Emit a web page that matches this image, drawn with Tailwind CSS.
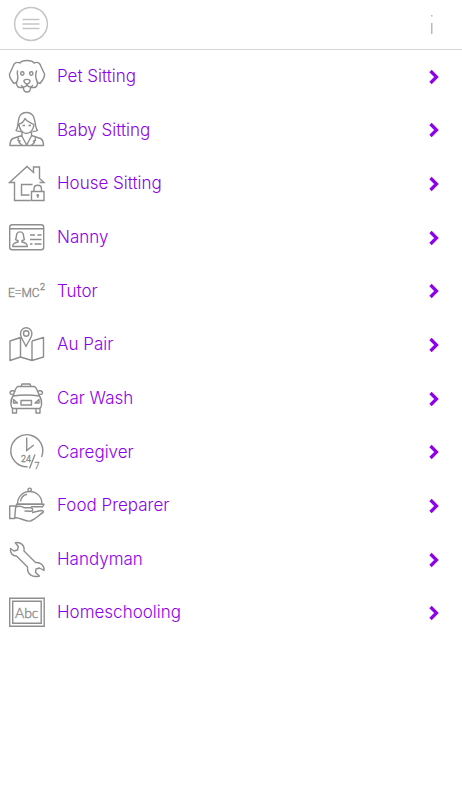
<!DOCTYPE html>
<html lang="en">
<head>
<meta charset="utf-8">
<meta name="viewport" content="width=device-width, initial-scale=1">
<title>Services</title>
<script src="https://cdn.jsdelivr.net/npm/@tailwindcss/browser@4"></script>
</head>
<body class="min-h-screen bg-white font-['Inter','Liberation_Sans',sans-serif]">
<header class="flex h-[50px] items-center justify-between border-b border-[#d4d4d4] pr-[23px] pl-[13px]">
  <button type="button" aria-label="Menu" class="pb-px">
    <svg class="size-9" viewBox="0 0 36 36" fill="none" stroke="#c3c5c6"><circle cx="18" cy="18" r="16.4" stroke-width="1.5"/><path d="M9.500 13.500h17M9.500 18h17M9.500 22.500h17" stroke-width="1.500"/></svg>
  </button>
  <button type="button" aria-label="Information" class="flex w-4 justify-center">
    <svg class="h-6 w-4" viewBox="0 0 16 24" fill="#b9b9b9"><path d="M8 2h1.500v1.500H8zM8 10h1.500v11H8z"/></svg>
  </button>
</header>
<main>
<ul class="grid min-h-[590px] auto-rows-fr text-[17px] font-light text-[#8c00ee]">
  <li><a href="#pet" class="flex h-full items-center gap-[3px] pr-5">
    <svg class="h-[52px] w-[54px] shrink-0" viewBox="0 1 54 52" fill="none" stroke="#8e8e8e" stroke-width="1.4" stroke-linejoin="round" stroke-linecap="round"><path d="M20 13c2-3.300 12-3.300 14 0M20 13c-4-1.500-6 0-7 3.500L9.500 24c-.5 3 1.500 6 4.500 9.500 2-.5 3.500-2 3.500-4.500M34 13c4-1.500 6 0 7 3.500l3.500 7.500c.5 3-1.500 6-4.500 9.500-2-.5-3.500-2-3.500-4.500M17.500 21c-1 3.500 1.500 6 0 9-2 4-.5 7.500 2.500 7.500 1.500 0 2.500 0 3.500-.5M36.500 21c-1 3.500-1.500 6 0 9 2 4 .5 7.500-2.500 7.500-1.500 0-2.500 0-3.500-.5M27 34.500c-1 3-4.500 3-5.500 1M27 34.500c1 3 4.500 3 5.500 1M23.500 38c0 5.300 7 5.300 7 0M24 30.500c1.500-1.500 4.500-1.500 6 0 .5 1.500-1.500 3.500-3 3.500s-3.500-2-3-3.500z"/><circle cx="22.300" cy="23.500" r="1.700"/><circle cx="31.300" cy="23.500" r="1.700"/></svg>
    <span class="flex-1">Pet Sitting</span>
    <svg class="h-4 w-3.5" viewBox="0 0 14 16" fill="none" stroke="#8c00ee" stroke-width="3.200"><path d="M2.500 2l6 6-6 6"/></svg></a></li>
  <li><a href="#baby" class="flex h-full items-center gap-[3px] pr-5">
    <svg class="h-[52px] w-[54px] shrink-0" viewBox="0 1 54 52" fill="none" stroke="#8e8e8e" stroke-width="1.4" stroke-linejoin="round"><path d="M21 28.500c-2 0-4-.3-5-1 2.500-2.500 1.500-10 3.500-14 3-5.300 11-5.300 14 0 2 4 1.500 11.500 4 14-1 .7-3 1-5 1M19 21c3.500-.5 5-3 6-5.500 2 4 6.500 4 8.500 6M19 21c0 5 3.500 9.500 7.500 9.500s7-4 7.500-9M22 29v3.500l-9 3c-2 1-3 4-3 7h33.500c0-3-1-6-3-7l-9-3V29M21.500 32.500l5.200 9.500 5-9.500M18.500 34l-.5 3.500 2 .5-1 1.500 3 2.500M35 34l.5 3.500-2 .5 1 1.500-3 2.500M22.500 22.500h2.500M28.500 22.500h2.500"/></svg>
    <span class="flex-1">Baby Sitting</span>
    <svg class="h-4 w-3.5" viewBox="0 0 14 16" fill="none" stroke="#8c00ee" stroke-width="3.200"><path d="M2.500 2l6 6-6 6"/></svg></a></li>
  <li><a href="#house" class="flex h-full items-center gap-[3px] pr-5">
    <svg class="h-[52px] w-[54px] shrink-0" viewBox="0 1 54 52" fill="none" stroke="#8e8e8e" stroke-width="1.4"><path d="M30.500 43.500h-16V25.500h-5L27 9.500l6.500 6V10h6v11.500l4.500 4H39.500M29.500 38h-8V27.500h11M31.500 34.500h12.500v9H31.500zM34 34.500V32c0-5 7.500-5 7.500 0v2.500"/><circle cx="37.800" cy="38.200" r="1.300" fill="#8e8e8e" stroke="none"/><path d="M37.800 38v3"/></svg>
    <span class="flex-1">House Sitting</span>
    <svg class="h-4 w-3.5" viewBox="0 0 14 16" fill="none" stroke="#8c00ee" stroke-width="3.200"><path d="M2.500 2l6 6-6 6"/></svg></a></li>
  <li><a href="#nanny" class="flex h-full items-center gap-[3px] pr-5">
    <svg class="h-[52px] w-[54px] shrink-0" viewBox="0 1 54 52" fill="none" stroke="#8e8e8e" stroke-width="1.4" stroke-linejoin="round"><rect x="9.700" y="13.700" width="34" height="25" rx="2.500"/><path d="M10 17.700h33.500M12.700 35.500h14.600c0-3-1.800-3.500-5.300-4.500v-1.500c2-.5 2.500-.5 2.500-1-1-1-.5-3.500-1.500-6-1-2.200-5-2.200-6 0-1 2.500-.5 5-1.500 6 0 .5.500.5 2.500 1V31c-3.500 1-5.300 1.500-5.300 4.500zM30 24h5M37.500 24h4M30 28.500h11.500M30 33h2.500M34.500 33h7"/></svg>
    <span class="flex-1">Nanny</span>
    <svg class="h-4 w-3.5" viewBox="0 0 14 16" fill="none" stroke="#8c00ee" stroke-width="3.200"><path d="M2.500 2l6 6-6 6"/></svg></a></li>
  <li><a href="#tutor" class="flex h-full items-center gap-[3px] pr-5">
    <svg class="h-[52px] w-[54px] shrink-0" viewBox="0 1 54 52" fill="#8e8e8e" stroke="#8e8e8e" stroke-width=".4" font-family="Roboto,sans-serif"><text x="8" y="33" font-size="12">E=MC</text><text x="40" y="26" font-size="9">2</text></svg>
    <span class="flex-1">Tutor</span>
    <svg class="h-4 w-3.5" viewBox="0 0 14 16" fill="none" stroke="#8c00ee" stroke-width="3.200"><path d="M2.500 2l6 6-6 6"/></svg></a></li>
  <li><a href="#aupair" class="flex h-full items-center gap-[3px] pr-5">
    <svg class="h-[52px] w-[54px] shrink-0" viewBox="0 1 54 52" fill="none" stroke="#8e8e8e" stroke-width="1.4" stroke-linejoin="round"><path d="M20.500 19.500 10 23v19.500l10.500-3.500 11.500 3.500 11.500-3.500V19.500L32 23M20.500 19.500V39M32 23v19.500M26 28.500c-2-5-5.500-8.500-5.500-13a5.700 5.700 0 0 1 11.400 0c0 4.500-3.900 8-5.900 13z"/><circle cx="26.200" cy="15.500" r="2.700"/></svg>
    <span class="flex-1">Au Pair</span>
    <svg class="h-4 w-3.5" viewBox="0 0 14 16" fill="none" stroke="#8c00ee" stroke-width="3.200"><path d="M2.500 2l6 6-6 6"/></svg></a></li>
  <li><a href="#carwash" class="flex h-full items-center gap-[3px] pr-5">
    <svg class="h-[52px] w-[54px] shrink-0" viewBox="0 1 54 52" fill="none" stroke="#8e8e8e" stroke-width="1.4" stroke-linejoin="round"><path d="M21 14.500 22 12h8l1 2.500M18 14.500h16c2 0 4 5 5.500 9.500 2 3 2.500 5 2 9-.2 2-.8 3-2 3.500H13c-1.200-.5-1.800-1.500-2-3.500-.5-4 0-6 2-9 1.500-4.500 3-9.500 5-9.500zM13 24c8-1.300 18-1.300 26.500 0M14.500 21.500c-1.500 1.500-4.500 1-4.500-.5 0-2.500 4-3 5.500-1M38 21.500c1.500 1.500 4.500 1 4.500-.5 0-2.500-4-3-5.500-1M12.500 36.500V41h4v-4.500M36 36.500V41h4v-4.500M21 28.500h10.500v4.500H21zM13.500 27.500l4 3.500h-4zM39 27.500 35 31h4z"/></svg>
    <span class="flex-1">Car Wash</span>
    <svg class="h-4 w-3.5" viewBox="0 0 14 16" fill="none" stroke="#8c00ee" stroke-width="3.200"><path d="M2.500 2l6 6-6 6"/></svg></a></li>
  <li><a href="#caregiver" class="flex h-full items-center gap-[3px] pr-5">
    <svg class="h-[52px] w-[54px] shrink-0" viewBox="0 1 54 52" fill="none" stroke="#8e8e8e" stroke-width="1.4"><path d="M27.500 41.700A16 16 0 1 1 41.500 32M26.700 12.500V25.500l7-5.500M35 29.500 29.500 43.500"/><g fill="#8e8e8e" stroke-width=".4" font-family="Roboto,sans-serif"><text x="21" y="36.500" font-size="9">24</text><text x="34.500" y="43.500" font-size="9">7</text></g></svg>
    <span class="flex-1">Caregiver</span>
    <svg class="h-4 w-3.5" viewBox="0 0 14 16" fill="none" stroke="#8c00ee" stroke-width="3.200"><path d="M2.500 2l6 6-6 6"/></svg></a></li>
  <li><a href="#food" class="flex h-full items-center gap-[3px] pr-5">
    <svg class="h-[52px] w-[54px] shrink-0" viewBox="0 1 54 52" fill="none" stroke="#8e8e8e" stroke-width="1.4" stroke-linejoin="round"><path d="M17.500 25c0-7 5-12.500 12.200-12.500S42 18 42 25zM16 25.300h28l-1.500 2.500H31M16 25.300l1 1.700M20.500 22.500c.5-3.500 3-6.500 6.500-7.200"/><circle cx="29.700" cy="10.800" r="1.700"/><path d="M9.700 27h6l-1 12.500h-5zM15.500 28c4-1.500 6-1 8.500.7h7c2 .5 2.500 3.300 0 3.500l-6.500-.2M32 33.500l9-2c2.500 0 3 1 2 2-4 2-6 6-12.500 8.500-5 .8-9-3-15.500-3.500"/></svg>
    <span class="flex-1">Food Preparer</span>
    <svg class="h-4 w-3.5" viewBox="0 0 14 16" fill="none" stroke="#8c00ee" stroke-width="3.200"><path d="M2.500 2l6 6-6 6"/></svg></a></li>
  <li><a href="#handyman" class="flex h-full items-center gap-[3px] pr-5">
    <svg class="h-[52px] w-[54px] shrink-0" viewBox="0 1 54 52" fill="none" stroke="#8e8e8e" stroke-width="1.4" stroke-linejoin="round"><path d="M15.300 9.700C20 8.500 25 12 24 18L35.500 29.500C40 29 44.500 32 44 37.500L39.500 35 36 36 35.500 39.500 39.500 43C32 45 27 41 27.500 34L16.500 23C12.500 23 10 20 10.500 15.500L14 18 17.500 17 18.300 13.500Z"/></svg>
    <span class="flex-1">Handyman</span>
    <svg class="h-4 w-3.5" viewBox="0 0 14 16" fill="none" stroke="#8c00ee" stroke-width="3.200"><path d="M2.500 2l6 6-6 6"/></svg></a></li>
  <li><a href="#homeschooling" class="flex h-full items-center gap-[3px] pr-5">
    <svg class="h-[52px] w-[54px] shrink-0" viewBox="0 1 54 52" fill="none" stroke="#8e8e8e" stroke-width="1.4"><path d="M9.700 12.200h34.500v28H9.700zM12.700 15.200h28.500v22H12.700z"/><text x="15" y="32" font-size="14" font-family="Lato,sans-serif" fill="#8e8e8e" stroke-width=".4">Abc</text></svg>
    <span class="flex-1">Homeschooling</span>
    <svg class="h-4 w-3.5" viewBox="0 0 14 16" fill="none" stroke="#8c00ee" stroke-width="3.200"><path d="M2.500 2l6 6-6 6"/></svg></a></li>
</ul>
</main>
</body>
</html>
